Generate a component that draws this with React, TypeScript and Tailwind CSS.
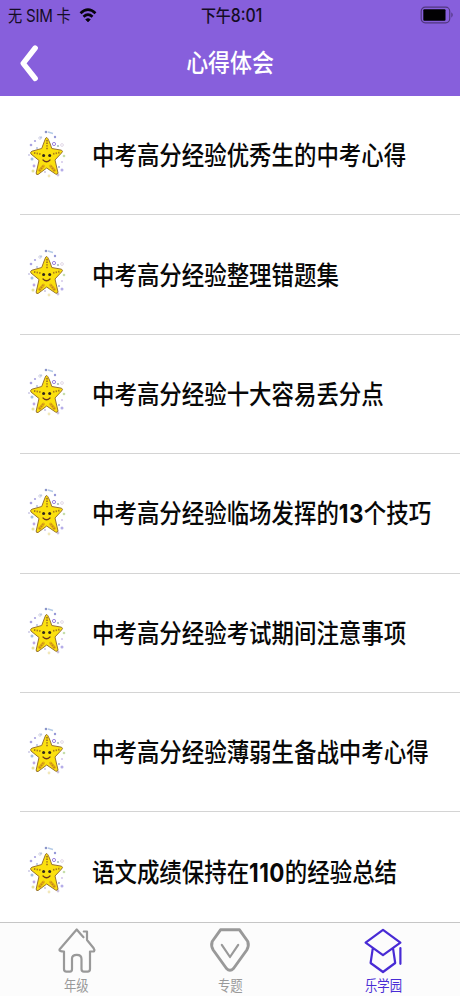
import React from "react";

const titles = [
  "中考高分经验优秀生的中考心得",
  "中考高分经验整理错题集",
  "中考高分经验十大容易丢分点",
  "中考高分经验临场发挥的13个技巧",
  "中考高分经验考试期间注意事项",
  "中考高分经验薄弱生备战中考心得",
  "语文成绩保持在110的经验总结",
];

const dots: [number, number, number, string][] = [
  [19, 4, 1.3, "#6673b8"], [28, 9, 1.2, "#7075c9"], [8, 13, 1.1, "#8b83d6"],
  [4, 17, 1.3, "#8e86d8"], [10, 20, 1, "#9aa8d8"], [31, 18, 1.1, "#83a6a0"],
  [2, 27, 1, "#b9b6dd"], [5, 31, 1.5, "#84a9d8"], [37, 28, 1.3, "#b3d38d"],
  [35, 34, 1, "#c4b4e3"], [7, 38, 1.4, "#a78be0"], [6, 43, 1.5, "#d9d77d"],
  [35, 42, 1.5, "#9c91e1"], [31, 47, 1.4, "#bcb0d8"], [22, 48, 1.4, "#eee0a4"],
  [18, 44, 1, "#b6aeda"], [32, 39, 1, "#7e8fce"],
];

function Starfish() {
  return (
    <svg className="mb-[5px] ml-px block h-[50px] w-10" viewBox="0 0 40 50" fill="none">
      {dots.map(([x, y, r, c], i) => (
        <circle key={i} cx={x} cy={y} r={r} fill={c} opacity="0.75" />
      ))}
      <path d="M21 4l5 1.5M13 10l2-1" stroke="#b5cbe7" strokeWidth="1.5" />
      <circle cx="13" cy="10" r="1.3" stroke="#c5c5df" strokeWidth=".7" />
      <circle cx="27" cy="16" r="1.6" stroke="#9b82e0" strokeWidth="1" />
      <circle cx="35" cy="17" r="1.4" stroke="#d5c8dd" strokeWidth=".7" />
      <path d="M19.8 9.5Q21.5 10.5 24.8 20.5L34.5 22.2Q36.5 23.3 34.5 25L28 32L31 45Q30.5 47 28.5 46L19.7 40L11 46.5Q9 47 9.2 45L12 32.5L4 26Q2.8 24 5 23.2L14.7 20.5L18.3 11Q18.8 9.5 19.8 9.5Z" fill="#fbe00e" stroke="#987331" strokeWidth="1" strokeLinejoin="round" />
      <path d="M20 12v10M7 25l6.5 1M32.5 24.5l-6.5 1.5M12.5 43l3.5-5M27.5 43l-3.5-5" stroke="#a97b1c" strokeWidth="1.8" strokeDasharray="1.4 1.2" />
      <path d="M12.5 42.5l4-4.5M27.5 42.5l-4-4.5" stroke="#d39118" strokeWidth="3" strokeLinecap="round" opacity=".6" />
      <circle cx="16.6" cy="27.5" r="1.5" fill="#30251b" />
      <circle cx="22.7" cy="27.5" r="1.5" fill="#30251b" />
      <path d="M16 32Q19.5 35.5 23 32" stroke="#6b371c" strokeWidth="1.2" strokeLinecap="round" />
    </svg>
  );
}

function Title({ text }: { text: string }) {
  return (
    <span className="mb-[2px] block origin-left scale-x-[0.863] whitespace-nowrap text-[26px] leading-[38px] font-medium">
      {text.split(/(\d+)/).map((part, i) =>
        /^\d+$/.test(part) ? (
          <span key={i} className="inline-block h-[38px] align-top font-['Inter'] text-[26px] leading-[41px] font-bold tracking-[0.5px]">{part}</span>
        ) : part
      )}
    </span>
  );
}

function Tab({ label, active, children }: { label: string; active?: boolean; children: React.ReactNode }) {
  return (
    <div className={`flex flex-1 flex-col items-center ${active ? "text-[#482bd5]" : "text-[#999]"}`}>
      <svg className="mt-[3px] block h-[48px] w-[46px] shrink-0" viewBox="0 0 46 48" fill="none" stroke="currentColor" strokeWidth="2.2" strokeLinejoin="round" strokeLinecap="round">
        {children}
      </svg>
      <span className="block scale-x-[0.865] text-[14.3px] leading-[21px] whitespace-nowrap">{label}</span>
    </div>
  );
}

export default function App() {
  return (
    <div className="flex h-[996px] w-[460px] flex-col overflow-hidden bg-white font-['Noto_Sans_CJK_SC',sans-serif] text-[#080808]">
      <header className="h-24 shrink-0 bg-[#875fdc]">
        <div className="grid h-[30px] grid-cols-3 items-center text-[#140c24]">
          <div className="flex items-center pl-[7.5px]">
            <div className="w-[71px]">
              <span className="block origin-left scale-x-[0.86] text-[16.5px] leading-6 whitespace-nowrap">
                无<span className="mx-[4.5px] font-['Inter'] text-[17.5px] tracking-[-0.3px]">SIM</span>卡
              </span>
            </div>
            <svg className="block h-[15px] w-[18px] shrink-0" viewBox="0 0 17 15" fill="none" stroke="#08040d" strokeWidth="2.7">
              <path d="M1 5.2Q8.5-1.8 16 5.2M4 8.7Q8.5 4.6 13 8.7" />
              <path d="M6.1 11.5Q8.5 9.4 10.9 11.5L8.5 14Z" fill="#08040d" stroke="#08040d" strokeWidth=".6" />
            </svg>
          </div>
          <span className="ml-1 block scale-x-[0.88] text-center text-[17px] leading-6 font-medium whitespace-nowrap">
            下午<span className="font-['Inter'] text-[18px]">8:01</span>
          </span>
          <svg className="mr-[6px] block h-[18px] w-[34px] justify-self-end" viewBox="0 0 34 18">
            <rect x="1.2" y="1.2" width="28.5" height="15.6" rx="4" fill="none" stroke="#51377f" strokeWidth="1.2" />
            <rect x="3.3" y="3.2" width="22.2" height="11.6" rx="1" fill="#020103" />
            <path d="M31.4 6.3Q34 9 31.4 11.7Z" fill="#51377f" />
          </svg>
        </div>
        <div className="grid h-[66px] grid-cols-[80px_1fr_80px] items-center text-white">
          <svg className="ml-[19px] mb-[1px] block h-[38px] w-5" viewBox="0 0 20 38" fill="none" stroke="white" strokeWidth="5.4" strokeLinecap="round" strokeLinejoin="round">
            <path d="M16.2 4L4.2 19.3L16.2 34.5" />
          </svg>
          <h1 className="mb-1 scale-x-[0.86] text-center text-[25.5px] leading-[38px] font-medium">心得体会</h1>
        </div>
      </header>
      <main className="flex h-[826px] shrink-0 flex-col overflow-hidden">
        {titles.map((title) => (
          <div key={title} className="flex h-[119.4px] shrink-0 pl-5">
            <div className="flex flex-1 items-center border-b border-[#d4d4d4] pl-1.5">
              <div className="w-[66px] shrink-0"><Starfish /></div>
              <Title text={title} />
            </div>
          </div>
        ))}
      </main>
      <nav className="flex h-[74px] shrink-0 border-t border-[#c6c6c6] bg-[#fcfcfc]">
        <Tab label="年级">
          <path d="M27 8.5L22.7 3.5L5.5 23.5Q5 25.5 10 25.5V43Q10 45.7 12.5 45.7H16Q18 45.7 18 43V32.5Q18 28.8 22.8 28.8Q27.5 28.8 27.5 33V43Q27.5 45.7 30 45.7H33.5Q36 45.7 36 43V25.5H40Q41 24 39.5 22L33 14V5.5H29.8M27 8.5L29.5 11.3" />
        </Tab>
        <Tab label="专题">
          <path strokeWidth="2.9" d="M13.5 3.8H32.5L40.8 15.5Q42.2 20 39.8 24L26.5 42.5Q23 46 19.5 42.5L6.2 24Q3.7 20 5.2 15.5Z" />
          <path d="M14.8 18.8L23 31L31.2 18.8" />
        </Tab>
        <Tab label="乐学园" active>
          <path d="M23 3.8L40.4 16.7L23 29.2L5.6 16.7ZM12.8 22.2L10.6 37L23 46L35.2 37L33 22.2M40.4 22V37.8" />
        </Tab>
      </nav>
    </div>
  );
}
